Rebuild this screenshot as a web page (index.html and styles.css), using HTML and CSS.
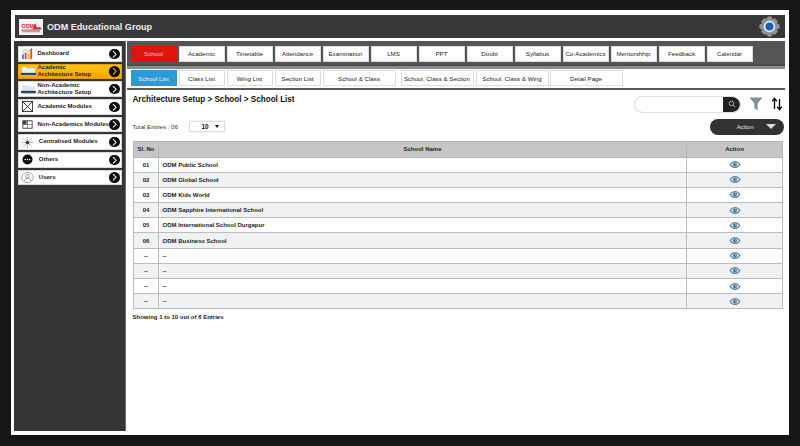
FILE: index.html
```html
<!DOCTYPE html>
<html lang="en">
<head>
<meta charset="utf-8">
<title>ODM Educational Group</title>
<link rel="stylesheet" href="styles.css">
</head>
<body>
<div class="frame">
  <header class="topbar">
    <div class="logo">
      <svg viewBox="0 0 24 16" width="24" height="16"><rect width="24" height="16" fill="#f4f4f4"/><text x="2.5" y="8.6" font-family="Liberation Sans, sans-serif" font-size="5.4" font-weight="700" fill="#d8262c">ODM</text><path d="M12 10 L21 8 L23 10 L15 10.4Z M16 4 L18 8.6 L14 9.4Z" fill="#c9262c"/><rect x="2.5" y="10.6" width="19" height=".9" fill="#b23a3e"/><rect x="3" y="12.4" width="18" height=".8" fill="#777"/></svg>
    </div>
    <span class="brand">ODM Educational Group</span>
    <svg class="gear" viewBox="0 0 24 24" width="21" height="21"><path d="M10 1h4l1 3 3-1 3 3-1 3 3 1v4l-3 1 1 3-3 3-3-1-1 3h-4l-1-3-3 1-3-3 1-3-3-1v-4l3-1-1-3 3-3 3 1z" fill="#8f9296" stroke="#8f9296" stroke-linejoin="round"/><circle cx="12" cy="12" r="6.5" fill="#e6edf5"/><circle cx="12" cy="12" r="4.6" fill="#1d5fb8"/></svg>
  </header>
  <div class="body">
    <nav class="sidebar">
      <a class="side-item"><svg class="side-icon" viewBox="0 0 14 14"><rect x="1" y="8" width="2" height="5" fill="#2a7fc4"/><rect x="4" y="6" width="2" height="7" fill="#e8442c"/><rect x="7" y="7" width="2" height="6" fill="#f4b022"/><rect x="10" y="2" width="2" height="11" fill="#e84a2c"/><path d="M1 6 L5 3 L8 5 L12 1" stroke="#5aa04a" fill="none" stroke-width=".8"/></svg><span class="side-label">Dashboard</span><i class="chev"><svg viewBox="0 0 10 10"><path d="M3.8 2 L6.8 5 L3.8 8" fill="none" stroke="#fff" stroke-width="1"/></svg></i></a>
      <a class="side-item is-active"><svg class="side-icon wide" viewBox="0 0 16 12"><path d="M1 2h5l1 1h8v7H1z" fill="#e9eef2"/><rect x="0" y="8" width="16" height="2.2" fill="#1f3f5e"/><rect x="1" y="10.2" width="14" height="1" fill="#aab4bc"/></svg><span class="side-label">Academic<br>Architecture Setup</span><i class="chev"><svg viewBox="0 0 10 10"><path d="M3.8 2 L6.8 5 L3.8 8" fill="none" stroke="#f5b10e" stroke-width="1"/></svg></i></a>
      <a class="side-item"><svg class="side-icon wide" viewBox="0 0 16 12"><path d="M1 2h5l1 1h8v7H1z" fill="#dfe5ea"/><rect x="0" y="8" width="16" height="2.2" fill="#1f3f5e"/><rect x="1" y="10.2" width="14" height="1" fill="#aab4bc"/></svg><span class="side-label">Non-Academic<br>Architecture Setup</span><i class="chev"><svg viewBox="0 0 10 10"><path d="M3.8 2 L6.8 5 L3.8 8" fill="none" stroke="#fff" stroke-width="1"/></svg></i></a>
      <a class="side-item"><svg class="side-icon" viewBox="0 0 14 14"><rect x="1.5" y="1.5" width="11" height="11" fill="none" stroke="#222" stroke-width=".9"/><path d="M1.5 1.5 L12.5 12.5 M12.5 1.5 L1.5 12.5" stroke="#222" stroke-width=".9"/></svg><span class="side-label">Academic Modules</span><i class="chev"><svg viewBox="0 0 10 10"><path d="M3.8 2 L6.8 5 L3.8 8" fill="none" stroke="#fff" stroke-width="1"/></svg></i></a>
      <a class="side-item"><svg class="side-icon" viewBox="0 0 14 14"><rect x="2" y="3" width="10" height="8" fill="none" stroke="#333" stroke-width=".9"/><rect x="2" y="3" width="4" height="4" fill="#444"/><path d="M2 7h10M7 3v8" stroke="#555" stroke-width=".7"/></svg><span class="side-label">Non-Academics Modules</span><i class="chev"><svg viewBox="0 0 10 10"><path d="M3.8 2 L6.8 5 L3.8 8" fill="none" stroke="#fff" stroke-width="1"/></svg></i></a>
      <a class="side-item"><svg class="side-icon" viewBox="0 0 14 14"><circle cx="7" cy="7" r="2" fill="#333"/><path d="M7 1v12M1 7h12M2.5 2.5l9 9M11.5 2.5l-9 9" stroke="#444" stroke-width=".6" stroke-dasharray="1.4 .8"/></svg><span class="side-label shift">Centralised Modules</span><i class="chev"><svg viewBox="0 0 10 10"><path d="M3.8 2 L6.8 5 L3.8 8" fill="none" stroke="#fff" stroke-width="1"/></svg></i></a>
      <a class="side-item"><svg class="side-icon" viewBox="0 0 14 14"><circle cx="7" cy="7" r="5.4" fill="#111"/><circle cx="4.6" cy="7" r=".8" fill="#fff"/><circle cx="7" cy="7" r=".8" fill="#fff"/><circle cx="9.4" cy="7" r=".8" fill="#fff"/></svg><span class="side-label shift">Others</span><i class="chev"><svg viewBox="0 0 10 10"><path d="M3.8 2 L6.8 5 L3.8 8" fill="none" stroke="#fff" stroke-width="1"/></svg></i></a>
      <a class="side-item"><svg class="side-icon" viewBox="0 0 14 14"><ellipse cx="7" cy="7" rx="6.2" ry="5.6" fill="none" stroke="#666" stroke-width=".6"/><circle cx="7" cy="5.6" r="2" fill="none" stroke="#555" stroke-width=".6"/><path d="M3.6 10.6c.6-2 2-2.6 3.4-2.6s2.8.6 3.4 2.6" fill="none" stroke="#555" stroke-width=".6"/></svg><span class="side-label shift">Users</span><i class="chev"><svg viewBox="0 0 10 10"><path d="M3.8 2 L6.8 5 L3.8 8" fill="none" stroke="#fff" stroke-width="1"/></svg></i></a>
    </nav>
    <main class="main">
      <div class="tabbar">
        <a class="tab is-red">School</a><a class="tab">Academic</a><a class="tab">Timetable</a><a class="tab">Attendance</a><a class="tab">Examination</a><a class="tab">LMS</a><a class="tab">PPT</a><a class="tab">Doubt</a><a class="tab">Syllabus</a><a class="tab">Co-Academics</a><a class="tab">Mentorshhip</a><a class="tab">Feedback</a><a class="tab">Calendar</a>
      </div>
      <div class="subbar">
        <a class="sub is-blue">School List</a><a class="sub">Class List</a><a class="sub">Wing List</a><a class="sub">Section List</a><a class="sub wide">School &amp; Class</a><a class="sub wide gap-left">School, Class &amp; Section</a><a class="sub wide">School, Class &amp; Wing</a><a class="sub wide tight-left">Detail Page</a>
      </div>
      <section class="content">
        <div class="title-row">
          <h1 class="crumbs">Architecture Setup &gt; School &gt; School List</h1>
          <div class="tools">
            <div class="search"><span class="search-btn"><svg viewBox="0 0 10 10" width="8" height="8"><circle cx="4.3" cy="4.3" r="2.8" fill="none" stroke="#ccc" stroke-width="1"/><path d="M6.4 6.4 L9 9" stroke="#ccc" stroke-width="1"/></svg></span></div>
            <svg class="filter" viewBox="0 0 14 14" width="14" height="14"><path d="M0.5 0.5h13L8.6 6.4V13.5L5.4 11V6.4z" fill="#7d9297"/></svg>
            <svg class="sort" viewBox="0 0 12 14" width="12" height="14"><path d="M3.5 12V2M1.2 4.2 3.5 1.4 5.8 4.2M8.5 2v10M6.2 9.8 8.5 12.6 10.8 9.8" fill="none" stroke="#111" stroke-width="1.4"/></svg>
          </div>
        </div>
        <div class="meta-row">
          <span class="entries">Total Entries : 06</span>
          <span class="select">10<i class="caret"></i></span>
          <span class="action-btn">Action<i class="action-caret"></i></span>
        </div>
        <table class="grid">
          <thead><tr><th class="c-no">Sl. No</th><th>School Name</th><th class="c-act">Action</th></tr></thead>
          <tbody>
            <tr><td class="c-no">01</td><td>ODM Public School</td><td class="c-act"><svg class="eye" viewBox="0 0 14 10"><use href="#eye"/></svg></td></tr>
            <tr><td class="c-no">02</td><td>ODM Global School</td><td class="c-act"><svg class="eye" viewBox="0 0 14 10"><use href="#eye"/></svg></td></tr>
            <tr><td class="c-no">03</td><td>ODM Kids World</td><td class="c-act"><svg class="eye" viewBox="0 0 14 10"><use href="#eye"/></svg></td></tr>
            <tr><td class="c-no">04</td><td>ODM Sapphire International School</td><td class="c-act"><svg class="eye" viewBox="0 0 14 10"><use href="#eye"/></svg></td></tr>
            <tr><td class="c-no">05</td><td>ODM International School Durgapur</td><td class="c-act"><svg class="eye" viewBox="0 0 14 10"><use href="#eye"/></svg></td></tr>
            <tr><td class="c-no">06</td><td>ODM Business School</td><td class="c-act"><svg class="eye" viewBox="0 0 14 10"><use href="#eye"/></svg></td></tr>
            <tr><td class="c-no">--</td><td>--</td><td class="c-act"><svg class="eye" viewBox="0 0 14 10"><use href="#eye"/></svg></td></tr>
            <tr><td class="c-no">--</td><td>--</td><td class="c-act"><svg class="eye" viewBox="0 0 14 10"><use href="#eye"/></svg></td></tr>
            <tr><td class="c-no">--</td><td>--</td><td class="c-act"><svg class="eye" viewBox="0 0 14 10"><use href="#eye"/></svg></td></tr>
            <tr><td class="c-no">--</td><td>--</td><td class="c-act"><svg class="eye" viewBox="0 0 14 10"><use href="#eye"/></svg></td></tr>
          </tbody>
        </table>
        <p class="showing">Showing 1 to 10 out of 6 Entries</p>
      </section>
    </main>
  </div>
</div>
<svg class="defs" width="0" height="0"><defs><g id="eye"><path d="M0.6 5C2.5 2 4.6 .8 7 .8S11.5 2 13.4 5C11.5 8 9.4 9.2 7 9.2S2.5 8 .6 5Z" fill="#5d87a6"/><path d="M2.4 5C3.6 3.2 5.2 2.4 7 2.4S10.4 3.2 11.6 5C10.4 6.8 8.8 7.6 7 7.6S3.6 6.8 2.4 5Z" fill="#dfe8ee"/><circle cx="7" cy="5" r="2.2" fill="#42708f"/><circle cx="7.6" cy="4.4" r=".7" fill="#dfe8ee"/></g></defs></svg>
</body>
</html>
```
FILE: styles.css
```css
* { box-sizing: border-box; }
html, body { margin: 0; height: 446px; overflow: hidden; }
body { background: #161616; font-family: "Liberation Sans", Arial, sans-serif; color: #111; }
.defs { position: absolute; }
.frame { margin: 10px 11px 0; width: 778px; height: 425px; background: #fff; padding: 5px 4px 4px 2.5px; display: flex; flex-direction: column; }
.topbar { margin-left: 1.5px; height: 23px; background: #383838; display: flex; align-items: center; padding: 0 5px 0 4px; flex: none; }
.logo { width: 24px; height: 16px; flex: none; }
.logo svg { display: block; }
.brand { margin-left: 4px; color: #f0f0f0; font-size: 9.1px; font-weight: 700; flex: 1; }
.gear { flex: none; }
.body { display: flex; flex: 1; margin-top: 2.5px; min-height: 0; }
.sidebar { width: 112px; flex: none; background: #353535; border-right: 1px solid #6a6a6a; padding: 5.5px 3px 0 4px; display: flex; flex-direction: column; gap: 2.2px; }
.side-item { height: 15.5px; background: #fff; border: 1px solid #d8d8d8; display: flex; align-items: center; padding: 0 1px 0 2px; flex: none; }
.side-item.is-active { background: linear-gradient(#ffc21c, #f2a500); border-color: #e6a100; }
.side-icon { width: 13px; height: 13px; flex: none; margin-right: 4px; }
.side-icon.wide { width: 15px; height: 12px; margin-right: 2px; }
.side-label { flex: 1; font-size: 6px; font-weight: 700; line-height: 7.6px; color: #222; white-space: nowrap; }
.side-label.shift { margin-left: 1.3px; }
.chev { width: 10.5px; height: 10.5px; border-radius: 50%; background: #0c0c0c; flex: none; display: block; }
.chev svg { display: block; width: 10.5px; height: 10.5px; }
.main { flex: 1; min-width: 0; padding-left: 1px; display: flex; flex-direction: column; }
.tabbar { height: 28.5px; background: #555; border-bottom: 3.2px solid #8b8b8b; box-shadow: inset 0 -1.4px 0 #4a4a4a; display: flex; gap: 2px; padding: 5px 0 0 4px; flex: none; }
.tab { width: 46px; height: 16px; background: #fff; border: 1px solid #ddd; font-size: 6.2px; display: flex; align-items: center; justify-content: center; color: #222; white-space: nowrap; }
.tab.is-red { background: #e01408; border-color: #e01408; color: #f6d8d0; }
.subbar { height: 20.5px; border-bottom: 2.5px solid #5a5a5a; display: flex; gap: 2px; padding: 1px 0 0 4px; flex: none; }
.sub { width: 46px; height: 16px; background: #fff; border: 1px solid #ddd; font-size: 6.2px; display: flex; align-items: center; justify-content: center; color: #222; white-space: nowrap; }
.sub.wide { width: 73px; }
.sub.gap-left { margin-left: 3px; }
.sub.tight-left { margin-left: -1px; }
.sub.is-blue { background: #2c9ad6; border-color: #2c9ad6; color: #e9f5fb; }
.content { padding: 0 1.5px 0 6px; flex: 1; }
.title-row { display: flex; justify-content: space-between; align-items: flex-start; padding-top: 5px; height: 28px; }
.crumbs { margin: 0; font-size: 8.15px; font-weight: 700; line-height: 10px; color: #111; }
.tools { display: flex; align-items: flex-start; margin-top: 2px; padding-right: .5px; }
.search { width: 105px; height: 15px; border-radius: 8px; background: #fff; box-shadow: 0 0 2px #888; display: flex; justify-content: flex-end; overflow: hidden; }
.search-btn { width: 17px; height: 15px; background: #222; border-radius: 0 8px 8px 0; display: flex; align-items: center; justify-content: center; }
.filter { margin-left: 9px; }
.sort { margin-left: 8px; }
.meta-row { display: flex; align-items: center; height: 18px; }
.entries { width: 56.5px; font-size: 6.1px; color: #333; }
.select { width: 36px; height: 11px; border: 1px solid #ddd; display: flex; align-items: center; justify-content: center; gap: 6px; font-size: 6.4px; font-weight: 700; box-shadow: 0 0 1px #ccc; padding-left: 6px; }
.caret { width: 0; height: 0; border: 2.4px solid transparent; border-top: 3px solid #111; border-bottom: 0; }
.action-btn { margin-left: auto; width: 74px; height: 16px; border-radius: 8px; background: #333; color: #e8e8e8; font-size: 6px; display: flex; align-items: center; justify-content: flex-end; padding-right: 8px; gap: 12px; }
.action-caret { width: 0; height: 0; border: 5px solid transparent; border-top: 5px solid #ddd; border-bottom: 0; }
.grid { width: 650px; margin-top: 5.5px; margin-left: .5px; border-collapse: collapse; table-layout: fixed; font-size: 6px; }
.grid th { height: 15.5px; background: #c6c6c6; font-weight: 700; border: 1px solid #b5b5b5; padding: 0; color: #222; }
.grid td { height: 15.2px; padding: 0 0 0 3.5px; border: 1px solid #bdbdbd; font-weight: 700; color: #222; background: #fff; }
.grid tbody tr:nth-child(even) td { background: #f0f1f3; }
.grid .c-no { width: 25px; text-align: center; padding: 0; }
.grid .c-act { width: 96px; text-align: center; padding: 0; }
.eye { width: 12px; height: 9px; display: block; margin: 0 auto; }
.showing { margin: 3.5px 0 0; font-size: 6px; font-weight: 700; color: #222; line-height: 8px; }
```
